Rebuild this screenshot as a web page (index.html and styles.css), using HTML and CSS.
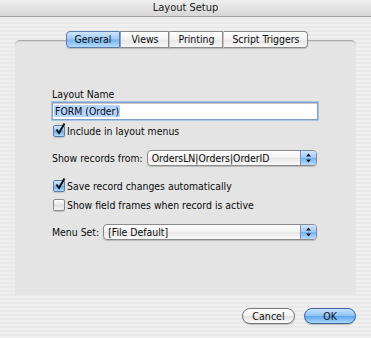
FILE: index.html
```html
<!DOCTYPE html>
<html>
    <head>
        <meta charset="UTF-8">
        <title>Layout Setup</title>
        <link rel="stylesheet" href="styles.css">
    </head>
    <body>
        <div class="window">
            <header class="titlebar">Layout Setup</header>

            <div class="content">
                <!-- tab strip sits on top of the panel edge -->
                <nav class="tabs">
                    <span class="tab active">General</span>
                    <span class="tab">Views</span>
                    <span class="tab">Printing</span>
                    <span class="tab">Script Triggers</span>
                </nav>

                <section class="panel">
                    <div class="label">Layout Name</div>
                    <div class="textfield"><span class="selected">FORM (Order)</span></div>

                    <div class="check first">
                        <span class="box checked">
                            <svg width="12" height="13" viewBox="0 0 12 13"><path d="M2.5 6.5 L5 10 L10.5 0.5" fill="none" stroke="#111" stroke-width="2"/></svg>
                        </span>
                        Include in layout menus
                    </div>

                    <div class="row">
                        <span class="row-label">Show records from:</span>
                        <div class="popup wide">
                            <span class="popup-text">OrdersLN|Orders|OrderID</span>
                            <span class="arrows">
                                <svg width="7" height="10" viewBox="0 0 7 10"><path d="M3.5 0.5 L6 3.5 L1 3.5 Z M1 6.5 L6 6.5 L3.5 9.5 Z" fill="#111"/></svg>
                            </span>
                        </div>
                    </div>

                    <div class="check spaced">
                        <span class="box checked">
                            <svg width="12" height="13" viewBox="0 0 12 13"><path d="M2.5 6.5 L5 10 L10.5 0.5" fill="none" stroke="#111" stroke-width="2"/></svg>
                        </span>
                        Save record changes automatically
                    </div>
                    <div class="check">
                        <span class="box"></span>
                        Show field frames when record is active
                    </div>

                    <div class="row">
                        <span class="row-label">Menu Set:</span>
                        <div class="popup menu">
                            <span class="popup-text">[File Default]</span>
                            <span class="arrows">
                                <svg width="7" height="10" viewBox="0 0 7 10"><path d="M3.5 0.5 L6 3.5 L1 3.5 Z M1 6.5 L6 6.5 L3.5 9.5 Z" fill="#111"/></svg>
                            </span>
                        </div>
                    </div>
                </section>

                <footer class="buttons">
                    <button class="btn">Cancel</button>
                    <button class="btn default">OK</button>
                </footer>
            </div>
        </div>
    </body>
</html>
```
FILE: styles.css
```css
body {
    margin: 0;
    font-family: "DejaVu Sans Condensed", "DejaVu Sans", sans-serif;
    font-size: 10.4px;
    color: #0a0a0a;
}

.window {
    width: 371px;
    height: 338px;
    background: repeating-linear-gradient(#efefef 0px, #efefef 2px, #e9e9e9 2px, #e9e9e9 4px);
    overflow: hidden;
}

.titlebar {
    height: 16px;
    line-height: 16px;
    text-align: center;
    font-size: 11px;
    color: #222;
    background: linear-gradient(#eeeeee, #d6d6d6);
    border-bottom: 1px solid #a0a0a0;
}

.content {
    padding: 14px 15px 0 15px;
}

/* tabs */
.tabs {
    display: flex;
    justify-content: center;
    margin-bottom: -8px;
    position: relative;
    z-index: 1;
    padding-left: 3px;
}

.tab {
    height: 15px;
    line-height: 15px;
    padding: 0 8px;
    background: linear-gradient(#ffffff, #f1f1f1 50%, #e6e6e6 51%, #f7f7f7);
    border: 1px solid #8c8c8c;
    border-left: 1px solid #c6c6c6;
    box-shadow: 0 1px 1px rgba(0, 0, 0, 0.18);
}

.tab:first-child {
    border-left: 1px solid #5b7db0;
    border-radius: 4px 0 0 4px;
}

.tab:last-child {
    border-radius: 0 4px 4px 0;
}

.tab.active {
    background: linear-gradient(#cfe6fd, #9ccaf6 48%, #76b3f1 52%, #b6dcfb);
    border-color: #5b7db0;
}

.tab.active + .tab {
    border-left-color: #8f9fb6;
    padding: 0 10px;
}

/* group box */
.panel {
    background: #e4e4e4;
    border-top: 1px solid #a9a9a9;
    border-radius: 5px 5px 0 0;
    box-shadow: inset 0 1px 0 #d5d5d5;
    padding: 47px 0 0 37px;
    box-sizing: border-box;
    height: 255px;
}

.label {
    line-height: 13px;
}

.textfield {
    margin-top: 1px;
    width: 266px;
    height: 18px;
    box-sizing: border-box;
    background: #fff;
    border: 1px solid #7f9fc8;
    box-shadow: 0 0 0 1px #a9c5e6, inset 0 1px 0 #c9c9c9;
    padding: 1px 0 0 1px;
    line-height: 14px;
}

.selected {
    background: #b5d5ff;
    padding: 0 1px;
}

.check {
    display: flex;
    align-items: center;
    height: 13px;
    gap: 2px;
    margin-top: 6px;
}

.check.first {
    margin-top: 4px;
}

.check.spaced {
    margin-top: 13px;
}

.box {
    position: relative;
    width: 10px;
    height: 10px;
    border: 1px solid #8a8a8a;
    border-radius: 2px;
    background: linear-gradient(#ffffff, #e2e2e2 55%, #f4f4f4);
    box-shadow: 0 1px 1px rgba(0, 0, 0, 0.15);
    margin-left: 1px;
}

.box.checked {
    background: linear-gradient(#cfe6fd, #8ec3f4 50%, #6aaeee 55%, #b3dafb);
    border-color: #5b7db0;
}

.box svg {
    position: absolute;
    left: 0;
    top: -3px;
}

.row {
    display: flex;
    align-items: center;
    margin-top: 13px;
    gap: 4px;
}

.popup {
    display: flex;
    height: 16px;
    box-sizing: border-box;
    border: 1px solid #8a8a8a;
    border-radius: 4px;
    background: linear-gradient(#ffffff, #f2f2f2 50%, #e7e7e7 52%, #fafafa);
    box-shadow: 0 1px 1px rgba(0, 0, 0, 0.18);
    overflow: hidden;
}

.popup.wide {
    width: 170px;
}

.popup.menu {
    width: 214px;
}

.popup-text {
    flex: 1;
    padding-left: 4px;
    line-height: 14px;
}

.arrows {
    width: 15px;
    display: flex;
    align-items: center;
    justify-content: center;
    background: linear-gradient(#cfe6fd, #9ccaf6 48%, #76b3f1 52%, #b6dcfb);
    border-left: 1px solid #7592bd;
}

/* bottom buttons */
.buttons {
    display: flex;
    justify-content: flex-end;
    gap: 9px;
    margin-top: 13px;
}

.btn {
    font-family: inherit;
    font-size: 10.6px;
    height: 16px;
    line-height: 13px;
    padding: 0;
    border: 1px solid #777;
    border-radius: 8px;
    background: linear-gradient(#ffffff, #f0f0f0 50%, #e1e1e1 52%, #fbfbfb);
    box-shadow: 0 1px 1px rgba(0, 0, 0, 0.2);
    color: #111;
    width: 53px;
}

.btn.default {
    width: 52px;
    border-color: #40639c;
    background: linear-gradient(#c6e2fd, #8cc2f5 48%, #5ea6ee 52%, #a9d6fb);
}
```
